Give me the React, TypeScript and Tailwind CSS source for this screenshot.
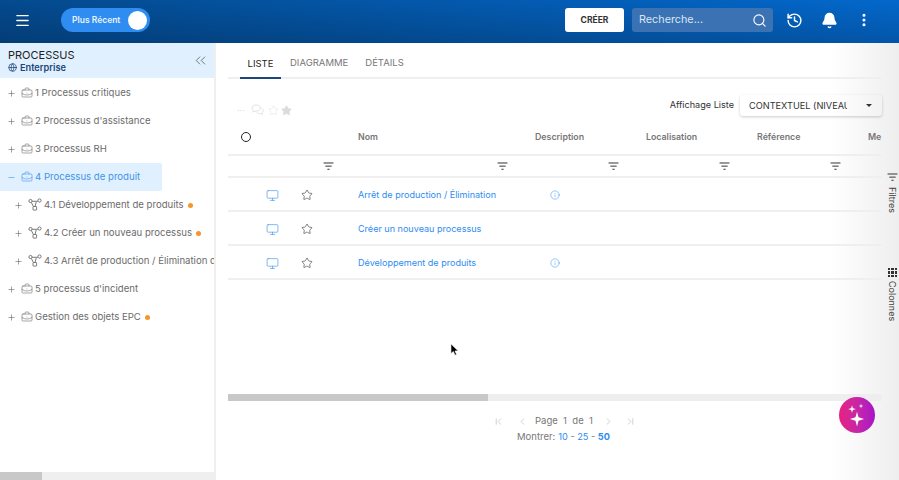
import { ChevronsLeft, Globe, History, Bell, EllipsisVertical, Menu, Search, Plus, Minus, BriefcaseBusiness, Star, Monitor, Info, ChevronLeft, ChevronRight, ChevronFirst, ChevronLast } from "lucide-react";

const font = "font-['Inter','Liberation_Sans',sans-serif]";

function FilterIcon({ className = "" }: { className?: string }) {
  return (
    <svg viewBox="0 0 12 10" className={`h-[9px] w-[11px] ${className}`} fill="currentColor">
      <rect x="0.5" y="0.5" width="11" height="1.2" />
      <rect x="2.5" y="4" width="7" height="1.2" />
      <rect x="4.8" y="7.5" width="2.4" height="1.2" />
    </svg>
  );
}

function FlowIcon() {
  return (
    <svg viewBox="0 0 14 14" className="h-[14px] w-[14px] shrink-0" fill="none" stroke="currentColor" strokeWidth="0.9">
      <circle cx="2.5" cy="3" r="1.6" />
      <circle cx="11.5" cy="2.5" r="1.6" />
      <rect x="5" y="8.5" width="3.6" height="3.6" rx="0.6" />
      <path d="M4.1 3.3 H9.9 M3.3 4.4 L5.4 8.5 M8.2 4 L7 8.5" />
    </svg>
  );
}

function TreeRow({ label, level = 0, icon = "case", dot = false, active = false }: { label: string; level?: number; icon?: string; dot?: boolean; active?: boolean }) {
  const color = active ? "text-[#3f94ea]" : "text-[#6b6b6b]";
  return (
    <div className={`flex h-[28px] shrink-0 items-center overflow-hidden whitespace-nowrap ${color} ${active ? "w-[162px] rounded-r-[2px] bg-[#e1f0fe]" : "w-[214px]"} ${level ? "pl-[14px]" : "pl-[7px]"}`}>
      {active ? <Minus size={9} strokeWidth={1.6} className="shrink-0" /> : <Plus size={9} strokeWidth={1.6} className="shrink-0 text-[#666]" />}
      <span className="ml-[5px] shrink-0">
        {icon === "case" ? <BriefcaseBusiness size={12} strokeWidth={1.2} /> : <FlowIcon />}
      </span>
      <span className="ml-[2px] shrink-0 text-[9.6px]">{label}</span>
      {dot && <span className="ml-[4px] h-[5px] w-[5px] shrink-0 rounded-full bg-[#f5952b]" />}
    </div>
  );
}

function TableRow({ label, info = false }: { label: string; info?: boolean }) {
  return (
    <div className="grid h-[34px] shrink-0 grid-cols-[130px_177px_111px] items-center border-b-2 border-[#efefef] pt-[2px]">
      <div className="flex items-center pl-[38px]">
        <Monitor size={13} strokeWidth={1.2} className="text-[#3f94ea]" />
        <Star size={12} strokeWidth={1.2} className="ml-[22px] text-[#333]" />
      </div>
      <span className="text-[9.05px] text-[#2f8cf0]">{label}</span>
      {info ? <Info size={10} strokeWidth={1.2} className="ml-[15px] text-[#2f8cf0]" /> : <span />}
    </div>
  );
}

export default function App() {
  return (
    <div className={`${font} relative flex h-[480px] w-[899px] flex-col overflow-hidden bg-white`}>
      <header className="flex h-[43px] shrink-0 items-center bg-[linear-gradient(to_bottom,rgba(0,0,0,0),rgba(0,0,0,0.18)),linear-gradient(to_right,#044a8f,#0368cc)] pb-[3px] shadow-[0_1px_2px_rgba(0,0,0,0.3)]">
        <Menu size={17} strokeWidth={1.8} className="ml-[14px] text-white" />
        <div className="ml-[30px] flex h-[24px] w-[89px] items-center justify-between rounded-full bg-[#2f8cf0] pl-[11px] pr-[3px]">
          <span className="text-[8.5px] font-semibold text-[#e8f3ff]">Plus Récent</span>
          <span className="h-[19px] w-[19px] rounded-full bg-white" />
        </div>
        <div className="ml-auto flex h-[24px] w-[59px] items-center justify-center rounded-[3px] bg-white text-[8.5px] font-bold text-[#333]">CRÉER</div>
        <div className="ml-[8px] flex h-[24px] w-[141px] items-center justify-between rounded-[3px] bg-[#3a72b4] pl-[7px] pr-[5px]">
          <span className="text-[10.8px] text-[#d9e6f5]">Recherche...</span>
          <Search size={15} strokeWidth={1.8} className="mr-[1px] text-white" />
        </div>
        <History size={17} strokeWidth={2.1} className="ml-[13px] text-white" />
        <Bell size={17} strokeWidth={2} fill="white" className="ml-[18px] text-white" />
        <EllipsisVertical size={16} strokeWidth={2.6} className="ml-[18px] mr-[27px] text-white" />
      </header>

      <div className="flex min-h-0 flex-1">
        <aside className="flex w-[216px] shrink-0 flex-col border-r-2 border-[#efefef]">
          <div className="flex h-[35px] shrink-0 items-center justify-between bg-[#e1f0fe] pl-[8px] pr-[5px]">
            <div className="flex flex-col">
              <span className="text-[11px] leading-[13px] text-[#222]">PROCESSUS</span>
              <span className="flex items-center gap-[3px] text-[9.2px] font-semibold leading-[11px] text-[#1d4778]">
                <Globe size={9} strokeWidth={2} />
                Enterprise
              </span>
            </div>
            <ChevronsLeft size={17} strokeWidth={1.1} className="text-[#555]" />
          </div>
          <div className="flex flex-col overflow-hidden pt-[1px]">
            <TreeRow label="1 Processus critiques" />
            <TreeRow label="2 Processus d'assistance" />
            <TreeRow label="3 Processus RH" />
            <TreeRow label="4 Processus de produit" active />
            <TreeRow label="4.1 Développement de produits" level={1} icon="flow" dot />
            <TreeRow label="4.2 Créer un nouveau processus" level={1} icon="flow" dot />
            <TreeRow label="4.3 Arrêt de production / Élimination du produit" level={1} icon="flow" />
            <TreeRow label="5 processus d'incident" />
            <TreeRow label="Gestion des objets EPC" dot />
          </div>
          <div className="mt-auto h-[8px] bg-[#efefef]">
            <div className="h-full w-[42px] bg-[#c8c8c8]" />
          </div>
        </aside>

        <main className="flex min-w-0 flex-1 bg-gradient-to-r from-white from-[90%] to-[#eeeeee]">
          <div className="ml-[12px] flex w-[654px] shrink-0 flex-col">
            <div className="flex h-[36px] shrink-0 items-end border-b-2 border-[#efefef] pl-[12px] text-[9.5px]">
              <span className="-mb-[2px] flex h-[36px] w-[41px] items-center justify-center border-b-2 border-[#1d4778] pt-[8px] text-[#222]">LISTE</span>
              <span className="ml-[9px] flex h-[36px] items-center pt-[8px] text-[#777]">DIAGRAMME</span>
              <span className="ml-[17px] flex h-[36px] items-center pt-[8px] text-[#777]">DÉTAILS</span>
            </div>

            <div className="flex h-[43px] shrink-0 items-start pt-[16px]">
              <div className="mt-[9px] ml-[9px] flex items-center text-[#dcdcdc]">
                <span className="text-[9px] leading-none">···</span>
                <svg viewBox="0 0 14 13" className="ml-[6px] h-[12px] w-[13px]" fill="none" stroke="currentColor" strokeWidth="0.9">
                  <path d="M5.5 1 C2.8 1 1 2.5 1 4.4 C1 5.5 1.6 6.4 2.4 7 L2 8.8 L4.2 7.7 C4.6 7.8 5 7.8 5.5 7.8 C8.2 7.8 10 6.3 10 4.4 C10 2.5 8.2 1 5.5 1 Z" />
                  <path d="M11.2 4.4 C12.4 5 13.2 6 13.2 7.2 C13.2 8.2 12.7 9 12 9.6 L12.4 11.4 L10.2 10.4 C8.6 10.6 7 10.1 6 9.2" />
                </svg>
                <Star size={11} strokeWidth={1} className="ml-[4px]" />
                <Star size={11} fill="currentColor" className="ml-[2px]" />
              </div>
              <span className="ml-auto mt-[3px] text-[9.1px] text-[#333]">Affichage Liste</span>
              <div className="ml-[6px] flex h-[21px] w-[142px] items-center rounded-[3px] pl-[9px] pr-[10px] shadow-[0_1px_3px_rgba(0,0,0,0.2)]">
                <span className="w-[98px] overflow-hidden whitespace-nowrap text-[9.2px] text-[#333]">CONTEXTUEL (NIVEAU)</span>
                <span className="ml-auto h-0 w-0 border-x-[3px] border-t-[3px] border-x-transparent border-t-[#333]" />
              </div>
            </div>

            <div className="grid h-[34px] shrink-0 grid-cols-[130px_177px_111px_111px_111px_14px] items-center overflow-hidden border-b-2 border-[#efefef] pb-[2px] text-[8.8px] font-semibold text-[#777]">
              <span className="ml-[13px] h-[10px] w-[10px] rounded-full border-[1.5px] border-[#222]" />
              <span>Nom</span>
              <span>Description</span>
              <span>Localisation</span>
              <span>Référence</span>
              <span className="overflow-hidden">Me</span>
            </div>
            <div className="grid h-[22px] shrink-0 grid-cols-[130px_177px_111px_111px_111px] items-center border-b-2 border-[#efefef] text-[#444]">
              <FilterIcon className="ml-[95px]" />
              <FilterIcon className="ml-[139px]" />
              <FilterIcon className="ml-[73px]" />
              <FilterIcon className="ml-[73px]" />
              <FilterIcon className="ml-[73px]" />
            </div>
            <TableRow label="Arrêt de production / Élimination" info />
            <TableRow label="Créer un nouveau processus" />
            <TableRow label="Développement de produits" info />

            <div className="mt-auto flex flex-col">
              <div className="h-[7px] bg-[#eeeeee]">
                <div className="h-full w-[260px] bg-[#c8c8c8]" />
              </div>
              <div className="flex h-[79px] flex-col pl-[265px] pt-[13px] text-[9.5px] text-[#777]">
                <div className="flex items-center">
                  <ChevronFirst size={11} strokeWidth={1.2} className="text-[#aaa]" />
                  <ChevronLeft size={11} strokeWidth={1.2} className="ml-[13px] text-[#aaa]" />
                  <span className="ml-[7px]">Page&nbsp; 1&nbsp; de&nbsp; 1</span>
                  <ChevronRight size={11} strokeWidth={1.2} className="ml-[10px] text-[#aaa]" />
                  <ChevronLast size={11} strokeWidth={1.2} className="ml-[11px] text-[#aaa]" />
                </div>
                <div className="mt-[2px] ml-[24px] flex gap-[3px]">
                  <span>Montrer:</span>
                  <span className="text-[9.2px] text-[#2f8cf0]">10 <span className="text-[#777]">-</span> 25 <span className="text-[#777]">-</span> <span className="font-bold">50</span></span>
                </div>
              </div>
            </div>
          </div>
        </main>
      </div>

      <div className="absolute left-[888px] top-[173px] flex w-[9px] flex-col items-center gap-[5px] text-[#444]">
        <FilterIcon className="h-[8px] w-[9px]" />
        <span className="text-[9px] leading-[9px] [writing-mode:vertical-rl]">Filtres</span>
      </div>
      <div className="absolute left-[888px] top-[268px] flex w-[9px] flex-col items-center gap-[4px] text-[#444]">
        <div className="grid h-[9px] w-[9px] grid-cols-3 gap-[1px]">
          {Array.from({ length: 9 }).map((_, i) => (
            <span key={i} className="bg-[#333]" />
          ))}
        </div>
        <span className="text-[9px] leading-[9px] [writing-mode:vertical-rl]">Colonnes</span>
      </div>

      <div className="absolute left-[839px] top-[397px] flex h-[36px] w-[36px] items-center justify-center rounded-full bg-gradient-to-r from-[#e81f80] to-[#a810c8]">
        <svg viewBox="0 0 24 24" className="h-[26px] w-[26px]" fill="white">
          <path d="M12 9 L13.4 14 L18.5 15.7 L13.4 17.4 L12 22.5 L10.6 17.4 L5.5 15.7 L10.6 14 Z" />
          <path d="M7.4 3 L8.2 5.7 L11 6.5 L8.2 7.3 L7.4 10 L6.6 7.3 L3.8 6.5 L6.6 5.7 Z" />
          <path d="M15.7 1.5 L16.2 3.2 L17.9 3.7 L16.2 4.2 L15.7 5.9 L15.2 4.2 L13.5 3.7 L15.2 3.2 Z" />
        </svg>
      </div>

      <svg viewBox="0 0 12 16" className="absolute left-[450px] top-[343px] h-[13px] w-[10px]">
        <path d="M1 1 L1 13 L4 10.5 L6 15 L8 14 L6 9.8 L10 9.8 Z" fill="black" stroke="white" strokeWidth="0.8" />
      </svg>
    </div>
  );
}
